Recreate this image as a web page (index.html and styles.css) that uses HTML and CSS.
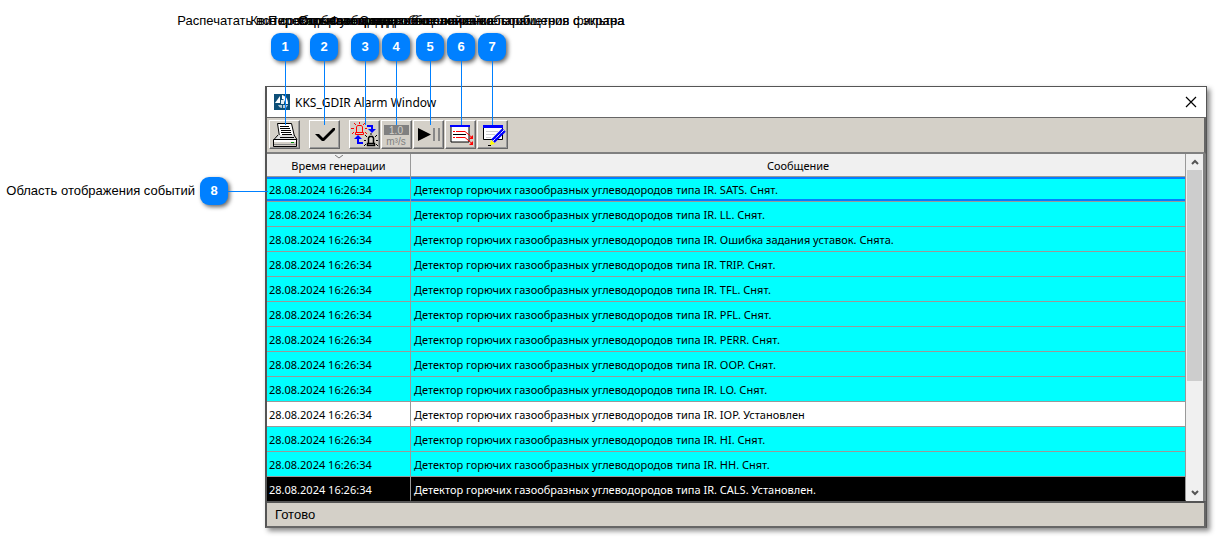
FILE: index.html
```html
<!DOCTYPE html>
<html lang="ru">
<head>
<meta charset="utf-8">
<title>KKS_GDIR Alarm Window</title>
<link rel="stylesheet" href="styles.css">
</head>
<body>
<main class="figure">
  <section class="window">
    <header class="titlebar">
      <svg class="logo" width="16" height="16" viewBox="0 0 16 16"><rect width="16" height="16" fill="#0d4f78"/><path d="M1 9l5-7v7z" fill="#fff"/><path d="M8 1c4 1 6 4 6 9h-3c0-3-1-5-3-5z" fill="#fff"/><path d="M7 6h3v4H7z" fill="#e6eef3"/><path d="M4 11h4v3c-2 0-3-1-4-3zM9 11h5l-2 3H9z" fill="#b7ccd8"/></svg>
      <h1 class="title">KKS_GDIR Alarm Window</h1>
      <button class="close" aria-label="Закрыть"><svg width="12" height="12" viewBox="0 0 12 12"><path d="M1 1l10 10M11 1L1 11" stroke="#000" stroke-width="1.2" fill="none"/></svg></button>
    </header>
    <div class="toolbar">
      <button class="tool wide" aria-label="Печать"><svg width="27" height="27" viewBox="0 0 27 27"><path d="M6.500 2.500h14l3 13h-15z" fill="#fff" stroke="#000"/><path d="M9 5.500h9M9 7.500h10M10 9.500h10M10 11.500h10M11 13.500h10" stroke="#000"/><path d="M7 14l-4 4.500h23L23 14" fill="#ddd" stroke="#000"/><path d="M9 16.500h14" stroke="#000"/><path d="M2.500 18.500h23v7h-23z" fill="#d4d0c8" stroke="#000"/><path d="M3 20h22" stroke="#fff" stroke-width="2"/><path d="M3 23.500h22" stroke="#888"/><path d="M20 21.500h3" stroke="#080"/></svg></button>
      <button class="tool wide" aria-label="Квитировать"><svg width="27" height="27" viewBox="0 0 27 27"><path d="M4 13h4l4 4 10-10h2v2L13 20h-2z" fill="#000"/></svg></button>
      <button class="tool" aria-label="Переключить"><svg width="27" height="27" viewBox="0 0 27 27"><path d="M5.500 11V6l1-1.500h4l1 1.500v5M4.500 11.500h8v2h-8z" stroke="red" fill="none"/><path d="M8.500 1v2M3 2l2 2M14 2l-2 2M0 7.500h3M14 7.500h2M1 13l2-2M16 13l-2-2" stroke="red" fill="none"/><path d="M17.500 22v-5l1-1.500h3l1 1.500v5M16.500 22.500h7v2h-7z" stroke="#000" stroke-width="1.500" fill="none"/><path d="M20 12v2M14 14l2 2M26 14l-2 2M13 19.500h2M25 19.500h2M13 25l2-2M27 25l-2-2" stroke="#000"/><path d="M16 5h5v3" stroke="#00f" stroke-width="2" fill="none"/><path d="M17 8h8l-4 4zM3 18l4-4 4 4z" fill="#00f"/><path d="M7 18v4h5" stroke="#00f" stroke-width="2" fill="none"/></svg></button>
      <button class="tool" aria-label="Значение"><svg width="27" height="27" viewBox="0 0 27 27"><rect x="1" y="4" width="25" height="10" fill="#808080"/><text class="unit" x="13" y="13" fill="#d4d0c8">1.0</text><text class="unit" x="13" y="24" fill="#808080">m³/s</text></svg></button>
      <button class="tool" aria-label="Пауза"><svg width="27" height="27" viewBox="0 0 27 27"><path d="M3 7l13 6.500L3 20z" fill="#000"/><path d="M18 7h2v13h-2zM23 7h2v13h-2z" fill="#888"/></svg></button>
      <button class="tool" aria-label="Список"><svg width="27" height="27" viewBox="0 0 27 27"><path d="M4 5h18v16H4z" fill="#fff" stroke="#000"/><path d="M3 5h20" stroke="#00f" stroke-width="2"/><path d="M6 10.500h2M6 16.500h2" stroke="red"/><path d="M6 13.500h13" stroke="#000"/><path d="M9 10.500h9l7 6M9 16.500h9l7 6" stroke="red" fill="none"/><path d="M26 14v4h-4zM26 20v4h-4z" fill="red"/></svg></button>
      <button class="tool" aria-label="Настройка"><svg width="27" height="27" viewBox="0 0 27 27"><path d="M4.500 6v12.500h19V6z" fill="#fff" stroke="#000"/><path d="M4 5.500h20" stroke="#00f" stroke-width="3"/><path d="M7 10.500h12M7 13.500h9M7 16.500h5" stroke="#ccc"/><path d="M25 9L14 20" stroke="#00f" stroke-width="5"/><path d="M25 9L14 20" stroke="#dde" stroke-width="1" stroke-dasharray="5 1"/><path d="M12 19l4 4-5 1z" fill="#ff0"/><path d="M9 24h3v1H9z" fill="#000"/></svg></button>
    </div>
    <div class="content">
      <table class="events">
        <colgroup><col class="col-time"><col></colgroup>
        <thead><tr><th><svg class="sort" width="8" height="4" viewBox="0 0 8 4"><path d="M0 0l4 3 4-3" fill="none" stroke="#777"/></svg>Время генерации</th><th>Сообщение</th></tr></thead>
        <tbody>
          <tr class="selected"><td>28.08.2024 16:26:34</td><td>Детектор горючих газообразных углеводородов типа IR. SATS. Снят.</td></tr>
          <tr><td>28.08.2024 16:26:34</td><td>Детектор горючих газообразных углеводородов типа IR. LL. Снят.</td></tr>
          <tr><td>28.08.2024 16:26:34</td><td>Детектор горючих газообразных углеводородов типа IR. Ошибка задания уставок. Снята.</td></tr>
          <tr><td>28.08.2024 16:26:34</td><td>Детектор горючих газообразных углеводородов типа IR. TRIP. Снят.</td></tr>
          <tr><td>28.08.2024 16:26:34</td><td>Детектор горючих газообразных углеводородов типа IR. TFL. Снят.</td></tr>
          <tr><td>28.08.2024 16:26:34</td><td>Детектор горючих газообразных углеводородов типа IR. PFL. Снят.</td></tr>
          <tr><td>28.08.2024 16:26:34</td><td>Детектор горючих газообразных углеводородов типа IR. PERR. Снят.</td></tr>
          <tr><td>28.08.2024 16:26:34</td><td>Детектор горючих газообразных углеводородов типа IR. OOP. Снят.</td></tr>
          <tr><td>28.08.2024 16:26:34</td><td>Детектор горючих газообразных углеводородов типа IR. LO. Снят.</td></tr>
          <tr class="plain"><td>28.08.2024 16:26:34</td><td>Детектор горючих газообразных углеводородов типа IR. IOP. Установлен</td></tr>
          <tr><td>28.08.2024 16:26:34</td><td>Детектор горючих газообразных углеводородов типа IR. HI. Снят.</td></tr>
          <tr><td>28.08.2024 16:26:34</td><td>Детектор горючих газообразных углеводородов типа IR. HH. Снят.</td></tr>
          <tr class="dark"><td>28.08.2024 16:26:34</td><td>Детектор горючих газообразных углеводородов типа IR. CALS. Установлен.</td></tr>
        </tbody>
      </table>
      <div class="scrollbar">
        <button class="arrow" aria-label="Вверх"><svg width="8" height="6" viewBox="0 0 8 6"><path d="M1 5l3-3 3 3" fill="none" stroke="#555" stroke-width="2"/></svg></button>
        <div class="track"><div class="thumb"></div></div>
        <button class="arrow" aria-label="Вниз"><svg width="8" height="6" viewBox="0 0 8 6"><path d="M1 1l3 3 3-3" fill="none" stroke="#555" stroke-width="2"/></svg></button>
      </div>
    </div>
    <footer class="status">Готово</footer>
  </section>

  <div class="callout c1"><span class="note">Распечатать все сообщения экрана</span><b class="badge">1</b></div>
  <div class="callout c2"><span class="note">Квитировать сообщения</span><b class="badge">2</b></div>
  <div class="callout c3"><span class="note">Переключение вида сообщений</span><b class="badge">3</b></div>
  <div class="callout c4"><span class="note">Скрыть и показать все значения</span><b class="badge">4</b></div>
  <div class="callout c5"><span class="note">Функция возобновления событий</span><b class="badge">5</b></div>
  <div class="callout c6"><span class="note">Отобразить подробное описание сообщения с экрана</span><b class="badge">6</b></div>
  <div class="callout c7"><span class="note">Создание и настройка параметров фильтра</span><b class="badge">7</b></div>
  <div class="callout side"><span class="note">Область отображения событий</span><b class="badge">8</b></div>
</main>
</body>
</html>
```
FILE: styles.css
```css
* { box-sizing: border-box; }
body { margin: 0; background: #fff; color: #000; font-family: "Liberation Sans", Arial, sans-serif; }
button { padding: 0; border: 0; background: none; display: flex; align-items: center; justify-content: center; }
.figure { position: relative; padding: 86px 9px 10px 265px; }

.window { border: 1px solid #555; border-left-width: 2px; border-bottom: 2px solid #666; box-shadow: 3px 3px 5px #0007; background: #d4d0c8; font-family: "Noto Sans", Tahoma, sans-serif; }
.titlebar { display: flex; align-items: center; height: 31px; padding: 0 9px 0 7px; background: #fff; border-bottom: 1px solid #666; }
.logo { margin-right: 5px; }
.title { margin: 0; flex: 1; font-size: 12px; font-weight: 400; }
.close { width: 12px; height: 12px; }
.toolbar { display: flex; gap: 1px; height: 36px; padding: 2px; border-right: 2px solid #666; border-bottom: 2px solid #808080; }
.tool { width: 31px; height: 29px; border: 1px solid; border-color: #fff #666 #666 #fff; box-shadow: inset -1px -1px #999; }
.wide { margin-right: 8px; }
.unit { font: 10px "Liberation Sans", Arial, sans-serif; text-anchor: middle; }

.content { display: flex; border-right: 3px solid #808080; background: #fff; }
.events { flex: 1; table-layout: fixed; border-collapse: separate; border-spacing: 0; font-size: 11px; line-height: 16px; }
.col-time { width: 144px; }
.events th { position: relative; height: 23px; padding: 2px 0 0; font-weight: 400; background: #f0f0f0; border-right: 1px solid #999; border-bottom: 1px solid #999; }
.sort { position: absolute; top: 1px; left: 50%; margin-left: -4px; }
.events td { height: 25px; padding: 2px 2px 0; background: #0ff; border-right: 1px solid #999; border-bottom: 1px solid #999; white-space: nowrap; }
.events td + td { padding-left: 3px; }
.events .selected td { box-shadow: inset 0 2px #0080ff, inset 0 -2px #0080ff; }
.events .plain td { background: #fff; }
.events .dark td { height: 24px; background: #000; color: #fff; border-bottom-color: #000; }
.scrollbar { display: flex; flex-direction: column; width: 17px; padding: 0 1px; background: #f0f0f0; }
.arrow { width: 15px; height: 16px; }
.track { flex: 1; }
.thumb { height: 67%; background: #cdcdcd; }
.status { height: 25px; padding-left: 8px; border-top: 2px solid #555; border-right: 2px solid #666; font: 13px/24px "Liberation Sans", Arial, sans-serif; }

.callout { position: absolute; top: 13px; width: 0; display: flex; flex-direction: column; align-items: center; gap: 4px; }
.note { white-space: nowrap; font-size: 13px; line-height: 16px; }
.badge { flex: none; width: 28px; height: 28px; border-radius: 9px; background: #0080ff; color: #fff; font-size: 13px; line-height: 28px; text-align: center; box-shadow: 2px 2px 4px #0009; }
.callout::after { content: ""; width: 1px; height: 64px; margin-top: -4px; background: #0080ff; }
.c1 { left: 285px; }
.c2 { left: 324px; }
.c3 { left: 365px; }
.c4 { left: 396px; }
.c5 { left: 430px; }
.c6 { left: 461px; }
.c7 { left: 492px; }
.side { top: 177px; left: 0; width: 268px; flex-direction: row; justify-content: flex-end; gap: 5px; }
.side::after { width: 40px; height: 1px; margin: 0 0 0 -5px; }
```
